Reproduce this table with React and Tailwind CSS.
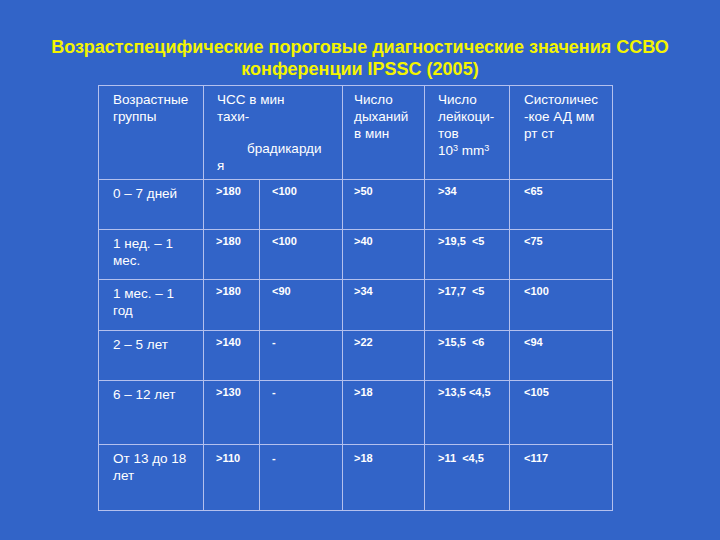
const rows = [
  { age: ["0 – 7 дней"], tachy: ">180", brady: "<100", resp: ">50", leu: ">34", bp: "<65", h: "h-[50px]", pt: "pt-[4px]" },
  { age: ["1 нед. – 1", "мес."], tachy: ">180", brady: "<100", resp: ">40", leu: ">19,5  <5", bp: "<75", h: "h-[50px]", pt: "pt-[4px]" },
  { age: ["1 мес. – 1", "год"], tachy: ">180", brady: "<90", resp: ">34", leu: ">17,7  <5", bp: "<100", h: "h-[51px]", pt: "pt-[4px]" },
  { age: ["2 – 5 лет"], tachy: ">140", brady: "-", resp: ">22", leu: ">15,5  <6", bp: "<94", h: "h-[50px]", pt: "pt-[4px]" },
  { age: ["6 – 12 лет"], tachy: ">130", brady: "-", resp: ">18", leu: ">13,5 <4,5", bp: "<105", h: "h-[64px]", pt: "pt-[4px]" },
  { age: ["От 13 до 18", "лет"], tachy: ">110", brady: "-", resp: ">18", leu: ">11  <4,5", bp: "<117", h: "h-[66px]", pt: "pt-[6px]" },
]

const cell = "border border-[#b4c0ee] align-top"

function Num({ children }) {
  return <div className="whitespace-pre text-[11px] font-bold leading-[14px]">{children}</div>
}

export default function App() {
  return (
    <div
      className="w-[720px] h-[540px] bg-[#3264c8] text-white overflow-hidden"
      style={{ fontFamily: '"Liberation Sans", Arial, sans-serif' }}
    >
      <h1 className="pt-[36px] text-center text-[18px] font-bold leading-[22px] text-[#f4f400]">
        Возрастспецифические пороговые диагностические значения ССВО
        <br />
        конференции IPSSC (2005)
      </h1>

      <table className="mt-[5px] ml-[98px] w-[514px] table-fixed border-collapse">
        <colgroup>
          <col className="w-[105px]" />
          <col className="w-[56px]" />
          <col className="w-[83px]" />
          <col className="w-[82px]" />
          <col className="w-[85px]" />
          <col className="w-[103px]" />
        </colgroup>
        <thead>
          <tr className="h-[94px] text-[13.5px] leading-[17px]">
            <th className={`${cell} pl-[14px] pt-[5px] text-left font-normal`}>
              Возрастные<br />группы
            </th>
            <th colSpan={2} className={`${cell} pl-[13px] pt-[5px] text-left font-normal`}>
              ЧСС в мин<br />тахи-
              <div className="mt-[15px] pl-[30px]">брадикарди</div>
              <div>я</div>
            </th>
            <th className={`${cell} pl-[11px] pt-[5px] text-left font-normal`}>
              Число<br />дыханий<br />в мин
            </th>
            <th className={`${cell} pl-[13px] pt-[5px] text-left font-normal`}>
              Число<br />лейкоци-<br />тов<br />
              10<sup className="text-[9px]">3</sup> mm<sup className="text-[9px]">3</sup>
            </th>
            <th className={`${cell} pl-[14px] pt-[5px] text-left font-normal`}>
              Систоличес<br />-кое АД мм<br />рт ст
            </th>
          </tr>
        </thead>
        <tbody>
          {rows.map((r, i) => (
            <tr key={i} className={r.h}>
              <td className={`${cell} pl-[14px] pt-[5px] text-[13.5px] leading-[17px]`}>
                {r.age.map((l, j) => (
                  <div key={j}>{l}</div>
                ))}
              </td>
              <td className={`${cell} pl-[12px] ${r.pt}`}>
                <Num>{r.tachy}</Num>
              </td>
              <td className={`${cell} pl-[12px] ${r.pt}`}>
                <Num>{r.brady}</Num>
              </td>
              <td className={`${cell} pl-[11px] ${r.pt}`}>
                <Num>{r.resp}</Num>
              </td>
              <td className={`${cell} pl-[13px] ${r.pt}`}>
                <Num>{r.leu}</Num>
              </td>
              <td className={`${cell} pl-[14px] ${r.pt}`}>
                <Num>{r.bp}</Num>
              </td>
            </tr>
          ))}
        </tbody>
      </table>
    </div>
  )
}
